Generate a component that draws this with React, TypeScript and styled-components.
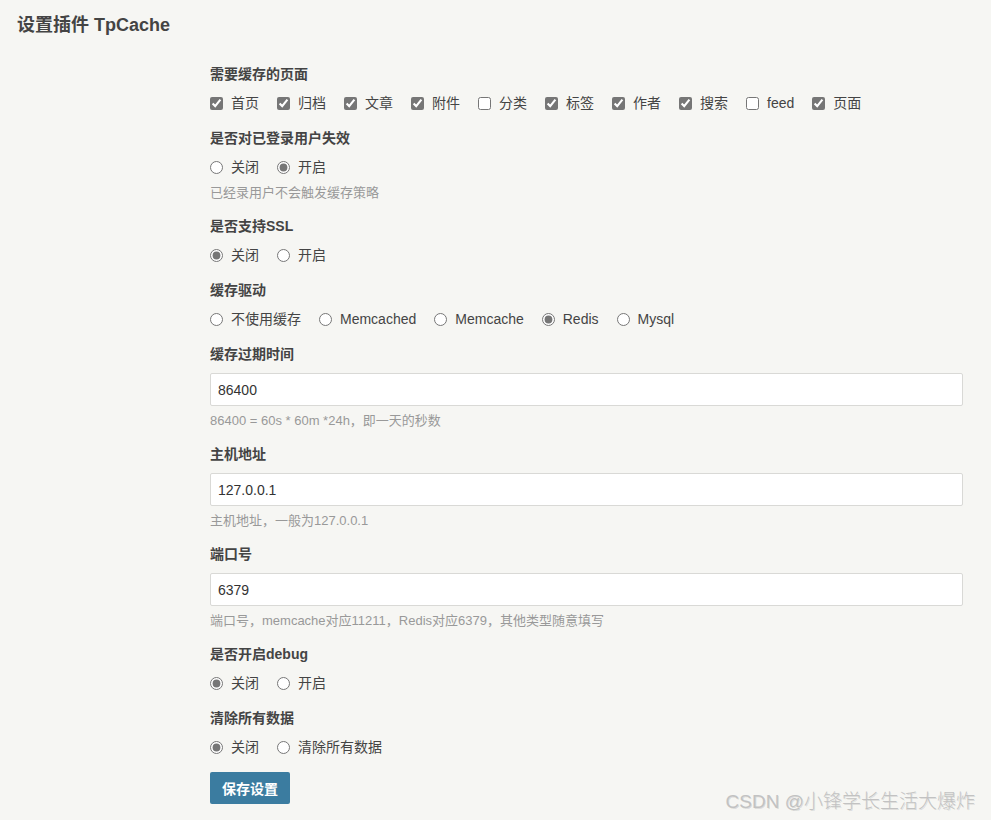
import React from "react";
import styled, { createGlobalStyle } from "styled-components";

const Global = createGlobalStyle`
  html, body { margin: 0; padding: 0; background: #f6f6f3; }
  body {
    font-family: "Liberation Sans", Arial, "Noto Sans CJK SC", sans-serif;
    font-size: 14px;
    color: #444;
    line-height: 1.5;
  }
  * { box-sizing: border-box; }
`;

const Page = styled.div`
  position: relative;
  min-height: 820px;
  padding: 10px 17px 0;
`;

const Title = styled.h2`
  margin: 0;
  font-size: 18px;
  font-weight: bold;
  line-height: 30px;
  color: #444;
`;

const Form = styled.form`
  margin: 24px 11px 0 193px;
`;

const Option = styled.ul`
  list-style: none;
  margin: 0 0 14px;
  padding: 0;
`;

const Item = styled.li`
  margin: 0;
`;

const Label = styled.label`
  display: block;
  font-weight: bold;
  line-height: 21px;
  margin-bottom: 8px;
`;

const Choices = styled.div`
  display: flex;
  align-items: center;
  flex-wrap: wrap;
  line-height: 21px;
`;

const Choice = styled.span`
  display: inline-flex;
  align-items: center;
  margin-right: 18px;
`;

const Box = styled.input`
  margin: 0 8px 0 0;
  width: 13px;
  height: 13px;
  accent-color: #767676;
`;

const ChoiceText = styled.label`
  color: #444;
`;

const Description = styled.p`
  margin: 5px 0 0;
  font-size: 13px;
  line-height: 19px;
  color: #999;
`;

const TextInput = styled.input`
  display: block;
  width: 100%;
  height: 33px;
  padding: 0 7px;
  border: 1px solid #d9d9d6;
  border-radius: 2px;
  background: #fff;
  font-family: "Liberation Sans", Arial, sans-serif;
  font-size: 14px;
  color: #333;
  outline: none;
`;

const Submit = styled.button`
  display: block;
  margin-top: 10px;
  width: 80px;
  height: 32px;
  border: none;
  border-radius: 2px;
  background: #3b7ca0;
  color: #fff;
  font-family: "Liberation Sans", Arial, "Noto Sans CJK SC", sans-serif;
  font-size: 14px;
  font-weight: bold;
  cursor: pointer;
`;

const Watermark = styled.div`
  position: absolute;
  right: 16px;
  bottom: 4px;
  font-family: "Liberation Sans", Arial, "Noto Sans CJK SC", sans-serif;
  font-size: 19px;
  font-weight: 300;
  color: #c2c2c2;
  text-shadow: 1px 1px 0 rgba(0, 0, 0, 0.1);
  white-space: nowrap;
`;

type Opt = { label: string; checked?: boolean };

const ChoiceGroup: React.FC<{ name: string; type: "checkbox" | "radio"; options: Opt[] }> = ({
  name,
  type,
  options,
}) => (
  <Choices>
    {options.map((o, i) => (
      <Choice key={i}>
        <Box type={type} name={name} id={`${name}-${i}`} defaultChecked={o.checked} />
        <ChoiceText htmlFor={`${name}-${i}`}>{o.label}</ChoiceText>
      </Choice>
    ))}
  </Choices>
);

const onOff = (on: boolean): Opt[] => [
  { label: "关闭", checked: !on },
  { label: "开启", checked: on },
];

export default function App() {
  return (
    <>
      <Global />
      <Page>
        <Title>设置插件 TpCache</Title>
        <Form onSubmit={(e) => e.preventDefault()}>
          <Option>
            <Item>
              <Label>需要缓存的页面</Label>
              <ChoiceGroup
                name="pages"
                type="checkbox"
                options={[
                  { label: "首页", checked: true },
                  { label: "归档", checked: true },
                  { label: "文章", checked: true },
                  { label: "附件", checked: true },
                  { label: "分类" },
                  { label: "标签", checked: true },
                  { label: "作者", checked: true },
                  { label: "搜索", checked: true },
                  { label: "feed" },
                  { label: "页面", checked: true },
                ]}
              />
            </Item>
          </Option>
          <Option>
            <Item>
              <Label>是否对已登录用户失效</Label>
              <ChoiceGroup name="login" type="radio" options={onOff(true)} />
              <Description>已经录用户不会触发缓存策略</Description>
            </Item>
          </Option>
          <Option>
            <Item>
              <Label>是否支持SSL</Label>
              <ChoiceGroup name="ssl" type="radio" options={onOff(false)} />
            </Item>
          </Option>
          <Option>
            <Item>
              <Label>缓存驱动</Label>
              <ChoiceGroup
                name="driver"
                type="radio"
                options={[
                  { label: "不使用缓存" },
                  { label: "Memcached" },
                  { label: "Memcache" },
                  { label: "Redis", checked: true },
                  { label: "Mysql" },
                ]}
              />
            </Item>
          </Option>
          <Option>
            <Item>
              <Label>缓存过期时间</Label>
              <TextInput defaultValue="86400" />
              <Description>86400 = 60s * 60m *24h，即一天的秒数</Description>
            </Item>
          </Option>
          <Option>
            <Item>
              <Label>主机地址</Label>
              <TextInput defaultValue="127.0.0.1" />
              <Description>主机地址，一般为127.0.0.1</Description>
            </Item>
          </Option>
          <Option>
            <Item>
              <Label>端口号</Label>
              <TextInput defaultValue="6379" />
              <Description>端口号，memcache对应11211，Redis对应6379，其他类型随意填写</Description>
            </Item>
          </Option>
          <Option>
            <Item>
              <Label>是否开启debug</Label>
              <ChoiceGroup name="debug" type="radio" options={onOff(false)} />
            </Item>
          </Option>
          <Option>
            <Item>
              <Label>清除所有数据</Label>
              <ChoiceGroup
                name="clear"
                type="radio"
                options={[{ label: "关闭", checked: true }, { label: "清除所有数据" }]}
              />
            </Item>
          </Option>
          <Submit type="submit">保存设置</Submit>
        </Form>
        <Watermark>CSDN @小锋学长生活大爆炸</Watermark>
      </Page>
    </>
  );
}
